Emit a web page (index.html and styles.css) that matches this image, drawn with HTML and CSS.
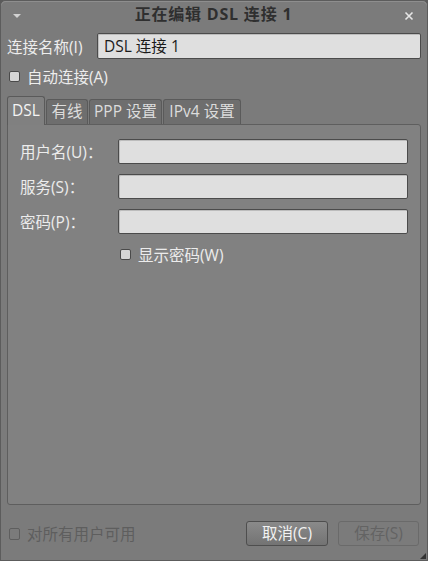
FILE: index.html
```html
<!DOCTYPE html>
<html lang="zh-CN">
<head>
<meta charset="utf-8">
<title>正在编辑 DSL 连接 1</title>
<link rel="stylesheet" href="styles.css">
</head>
<body>
<div class="window">
  <div class="titlebar">
    <span class="tb-side"><span class="menu-arrow"></span></span>
    <span class="title">正在编辑 DSL 连接 1</span>
    <span class="tb-side right"><svg class="close" width="10" height="10" viewBox="0 0 10 10"><path d="M1.5 1.5 L8.5 8.5 M8.5 1.5 L1.5 8.5" stroke="#e6e6e6" stroke-width="1.6" fill="none"/></svg></span>
  </div>
  <div class="body">
    <div class="name-row">
      <span class="label">连接名称(I)</span>
      <div class="entry">DSL 连接 1</div>
    </div>
    <div class="check-row">
      <span class="checkbox"></span>
      <span class="label">自动连接(A)</span>
    </div>
    <div class="tabs">
      <div class="tab active">DSL</div>
      <div class="tab">有线</div>
      <div class="tab">PPP 设置</div>
      <div class="tab">IPv4 设置</div>
    </div>
    <div class="panel">
      <div class="form">
        <span class="label">用户名(U)：</span>
        <div class="entry"></div>
        <span class="label">服务(S)：</span>
        <div class="entry"></div>
        <span class="label">密码(P)：</span>
        <div class="entry"></div>
        <span></span>
        <div class="check-row inner">
          <span class="checkbox"></span>
          <span class="label">显示密码(W)</span>
        </div>
      </div>
    </div>
    <div class="footer">
      <div class="check-row disabled">
        <span class="checkbox"></span>
        <span class="label">对所有用户可用</span>
      </div>
      <div class="buttons">
        <div class="button">取消(C)</div>
        <div class="button disabled">保存(S)</div>
      </div>
    </div>
  </div>
  <span class="grip"></span>
</div>
</body>
</html>
```

FILE: styles.css
```css
html, body {
  margin: 0;
  padding: 0;
  background: #5a5a5a;
}
body {
  font-family: "Open Sans", "Noto Sans CJK SC", sans-serif;
  font-size: 15.5px;
  color: #ededed;
}
.window {
  position: relative;
  width: 428px;
  height: 561px;
  box-sizing: border-box;
  background: #7b7b7b;
  border: 1px solid #5c5c5c;
  border-radius: 5px 5px 0 0;
  display: flex;
  flex-direction: column;
}
.titlebar {
  height: 28px;
  flex: none;
  display: flex;
  align-items: center;
  justify-content: space-between;
  padding: 0 13px 4px 12px;
  box-sizing: border-box;
  box-shadow: inset 0 1px 0 #8e8e8e;
  border-radius: 5px 5px 0 0;
}
.tb-side {
  width: 20px;
  display: flex;
  align-items: center;
}
.tb-side.right {
  justify-content: flex-end;
}
.menu-arrow {
  width: 0;
  height: 0;
  border-left: 4px solid transparent;
  border-right: 4px solid transparent;
  border-top: 4px solid #d2d2d2;
  margin-top: 5px;
}
.title {
  font-weight: bold;
  font-size: 16px;
  letter-spacing: 0.8px;
  color: #2f2f2f;
}
.close {
  margin-top: 6px;
}
.body {
  flex: 1;
  display: flex;
  flex-direction: column;
  padding: 0 6px 0 6px;
}
.label {
  white-space: nowrap;
}
.entry {
  box-sizing: border-box;
  height: 26px;
  background: #dfdfdf;
  border: 1px solid #4b4b4b;
  border-radius: 2px;
  color: #1a1a1a;
  padding: 0 6px;
  line-height: 24px;
  box-shadow: inset 1px 1px 0 #bcbcbc;
}
.name-row {
  display: flex;
  align-items: center;
  margin-top: 4px;
}
.name-row .label {
  width: 90px;
}
.name-row .entry {
  flex: 1;
}
.check-row {
  display: flex;
  align-items: center;
  gap: 7px;
}
.body > .check-row {
  margin-top: 6px;
  padding-left: 2px;
  height: 22px;
}
.checkbox {
  box-sizing: border-box;
  width: 11px;
  height: 11px;
  background: #d6d6d6;
  border: 1px solid #4a4a4a;
  border-radius: 2px;
}
.tabs {
  display: flex;
  align-items: flex-end;
  margin-top: 9px;
  height: 28px;
}
.tab {
  box-sizing: border-box;
  height: 25px;
  line-height: 23px;
  text-align: center;
  background: #6e6e6e;
  border: 1px solid #5a5a5a;
  border-bottom: none;
  border-radius: 3px 3px 0 0;
  color: #dcdcdc;
  margin-right: 1px;
  white-space: nowrap;
}
.tab:nth-child(2) { width: 42px; }
.tab:nth-child(3) { width: 73px; }
.tab:nth-child(4) { width: 78px; }
.tab.active {
  width: 38px;
  height: 29px;
  line-height: 27px;
  background: #808080;
  color: #f4f4f4;
  position: relative;
  z-index: 1;
  margin-bottom: -1px;
}
.panel {
  height: 381px;
  box-sizing: border-box;
  background: #818181;
  border: 1px solid #5e5e5e;
  border-radius: 0 3px 3px 3px;
  padding: 14px 12px 0 12px;
}
.form {
  display: grid;
  grid-template-columns: 98px 1fr;
  row-gap: 10px;
  align-items: center;
}
.form .label {
  color: #ececec;
}
.form .entry {
  height: 25px;
}
.check-row.inner {
  padding-left: 2px;
  margin-top: -1px;
}
.footer {
  flex: 1;
  display: flex;
  align-items: center;
  justify-content: space-between;
  padding: 5px 2px 3px 2px;
}
.check-row.disabled {
  color: #5e5e5e;
}
.check-row.disabled .checkbox {
  width: 11px;
  height: 12px;
  background: transparent;
  border-color: #5e5e5e;
}
.buttons {
  display: flex;
  gap: 10px;
}
.button {
  box-sizing: border-box;
  width: 82px;
  height: 25px;
  line-height: 23px;
  text-align: center;
  border: 1px solid #4e4e4e;
  border-radius: 3px;
  background: linear-gradient(#8a8a8a, #737373);
  color: #f2f2f2;
}
.button.disabled {
  width: 81px;
  background: #7b7b7b;
  border-color: #6a6a6a;
  color: #636363;
}
.grip {
  position: absolute;
  right: 1px;
  bottom: 1px;
  width: 0;
  height: 0;
  border-left: 6px solid transparent;
  border-bottom: 6px solid #333;
}
```
